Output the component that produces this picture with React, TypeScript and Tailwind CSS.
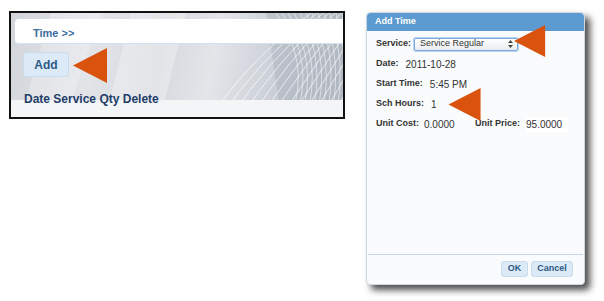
import React from 'react';

const rows = [
  { label: 'Date:', value: '2011-10-28' },
  { label: 'Start Time:', value: '5:45 PM' },
  { label: 'Sch Hours:', value: '1' },
];

function Arrow({ className }: { className: string }) {
  return (
    <svg className={`absolute ${className}`} viewBox="0 0 36 36" fill="#d9530f">
      <polygon points="0,18 35,0 35,36" />
    </svg>
  );
}

function PanelPattern() {
  const curves = Array.from({ length: 14 }, (_, i) => i);
  return (
    <svg className="absolute inset-0 w-full h-full" viewBox="0 0 332 104" preserveAspectRatio="none">
      <polygon points="40,0 90,0 55,104 10,104" fill="#ffffff" opacity="0.25" />
      <polygon points="120,0 175,0 150,104 95,104" fill="#ffffff" opacity="0.3" />
      <polygon points="255,0 332,0 332,104 270,104" fill="#a9b0bb" opacity="0.45" />
      {curves.map((i) => (
        <path
          key={`a${i}`}
          d={`M ${200 + i * 10} 104 Q ${235 + i * 10} 50 ${300 + i * 6} 0`}
          stroke="#ffffff"
          strokeWidth="0.8"
          fill="none"
          opacity="0.85"
        />
      ))}
      {curves.map((i) => (
        <path
          key={`b${i}`}
          d={`M ${280 + i * 5} 104 Q ${300 + i * 4} 50 ${265 + i * 6} 0`}
          stroke="#ffffff"
          strokeWidth="0.7"
          fill="none"
          opacity="0.75"
        />
      ))}
    </svg>
  );
}

export default function App() {
  return (
    <div className="relative w-[604px] h-[301px] bg-white flex items-start overflow-hidden font-['Liberation_Sans',Arial,sans-serif]">
      {/* left panel */}
      <div className="ml-[9px] mt-[11px] w-[336px] h-[108px] border-2 border-[#111] relative bg-[linear-gradient(100deg,#d2d5da_0%,#e2e4e8_25%,#d6d9de_45%,#e3e5e9_60%,#c9ced6_80%,#b7bdc7_100%)] flex flex-col">
        <PanelPattern />
        <div className="relative flex flex-col h-full">
          <div className="h-[6px]" />
          <div className="ml-[4px] h-[25px] rounded-l-[4px] bg-white border-b border-[#d5e1ee] flex items-center pl-[18px] pt-[5px] text-[11px] font-bold text-[#3c6d9e]">
            Time &gt;&gt;
          </div>
          <div className="mt-[8px] ml-[12px] w-[46px] h-[25px] rounded-[3px] bg-[#dce9f6] border border-[#c9dcef] flex items-center justify-center text-[12px] font-bold text-[#2d5985]">
            Add
          </div>
          <div className="mt-[6px] flex-1 flex flex-col relative">
            <div className="absolute left-0 right-0 bottom-0 h-[17px] bg-[#f4f5f7]" />
            <div className="relative ml-[13px] text-[12px] font-bold text-[#1f3d69] leading-[14px] mt-[9px]">
              Date Service Qty Delete
            </div>
          </div>
        </div>
      </div>

      {/* dialog */}
      <div className="ml-[21px] mt-[12px] w-[219px] h-[273px] rounded-[4px] bg-[#f9fbfc] border border-[#d0d8e0] shadow-[5px_5px_7px_rgba(0,0,0,0.7)] flex flex-col text-[9px] text-[#333]">
        <div className="h-[18px] rounded-t-[4px] bg-[#5b9bd1] pl-[8px] flex items-center font-bold text-white">
          Add Time
        </div>
        <div className="pt-[3px] px-[9px] flex flex-col">
          <div className="h-[20px] flex items-center">
            <span className="font-bold">Service:</span>
            <div className="ml-[3px] w-[104px] h-[13px] rounded-[2px] border border-[#7eaadb] shadow-[0_0_0_1px_#b9d2ee] bg-[linear-gradient(#ffffff,#e9ecef)] flex items-center justify-between pl-[5px] pr-[4px]">
              <span>Service Regular</span>
              <svg width="5" height="8" viewBox="0 0 5 8" fill="#444">
                <polygon points="2.5,0 5,3 0,3" />
                <polygon points="0,5 5,5 2.5,8" />
              </svg>
            </div>
          </div>
          {rows.map((r) => (
            <div key={r.label} className="h-[20px] flex items-center">
              <span className="font-bold">{r.label}</span>
              <span className="ml-[7px] text-[10px]">{r.value}</span>
            </div>
          ))}
          <div className="h-[20px] flex items-center">
            <span className="font-bold">Unit Cost:</span>
            <span className="ml-[5px] text-[10px] w-[51px]">0.0000</span>
            <span className="font-bold">Unit Price:</span>
            <span className="ml-[6px] text-[10px] bg-white pr-[6px]">95.0000</span>
          </div>
        </div>
        <div className="flex-1" />
        <div className="mx-[1px] border-t border-[#c5d7ea] h-[30px] flex items-start justify-end gap-[3px] pt-[6px] pr-[10px]">
          <div className="w-[27px] h-[16px] rounded-[3px] bg-[#dce9f6] border border-[#c9dcef] flex items-center justify-center font-bold text-[#2d5985]">
            OK
          </div>
          <div className="w-[42px] h-[16px] rounded-[3px] bg-[#dce9f6] border border-[#c9dcef] flex items-center justify-center font-bold text-[#2d5985]">
            Cancel
          </div>
        </div>
      </div>

      {/* arrows */}
      <Arrow className="left-[73px] top-[48px] w-[35px] h-[35px]" />
      <Arrow className="left-[514px] top-[24px] w-[32px] h-[34px]" />
      <Arrow className="left-[448px] top-[88px] w-[34px] h-[33px]" />
    </div>
  );
}
